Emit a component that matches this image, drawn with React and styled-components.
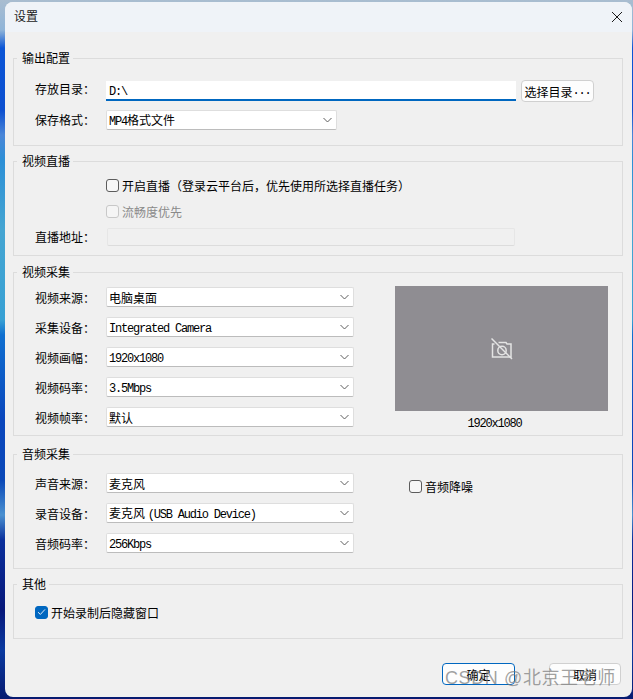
import React from "react";
import styled, { createGlobalStyle } from "styled-components";

const GlobalStyle = createGlobalStyle`
  html, body {
    margin: 0;
    padding: 0;
    background: #0a3fb0;
  }
  * {
    box-sizing: border-box;
  }
`;

const Desktop = styled.div`
  position: relative;
  width: 633px;
  height: 699px;
  padding: 2px 1px 2px 5px;
  overflow: hidden;
  background: linear-gradient(
    180deg,
    #a9bdd0 0,
    #8fb4d8 30px,
    #0b55d6 48px,
    #0c4fd0 110px,
    #4a86d8 135px,
    #2c8fd6 160px,
    #45a5d2 230px,
    #37a0d4 320px,
    #0f6fd0 335px,
    #0a46bc 420px,
    #0a48b8 480px,
    #4a90d0 515px,
    #0a2f9c 540px,
    #07187a 610px,
    #0a3aa0 650px,
    #071a70 699px
  );
  font-family: "Noto Sans CJK SC", "Liberation Sans", sans-serif;
  font-size: 12px;
  color: #000;
`;

const Window = styled.div`
  display: flex;
  flex-direction: column;
  height: 100%;
  background: #f0f0f0;
  border-radius: 8px;
  overflow: hidden;
`;

const TitleBar = styled.div`
  display: flex;
  align-items: center;
  justify-content: space-between;
  flex: none;
  height: 30px;
  padding: 0 10px 0 9px;
  background: #eff3f8;
  color: #1a1a1a;
`;

const TitleText = styled.span`
  margin-bottom: 3px;
`;

const CloseIcon = styled.svg`
  display: block;
  width: 10px;
  height: 10px;
`;

const Body = styled.div`
  display: flex;
  flex-direction: column;
  flex: 1;
  padding: 18px 9px 0 8px;
`;

const Group = styled.fieldset`
  margin: ${(p) => p.$top || 0}px 0 0;
  padding: ${(p) => p.$pad || "14px 0 14px 21px"};
  border: 1px solid #dcdcdc;
  min-width: 0;
`;

const Legend = styled.legend`
  margin-left: -18px;
  padding: 0 3px 0 5px;
  height: 16px;
  line-height: 16px;
`;

const Row = styled.div`
  display: flex;
  align-items: center;
  margin-top: ${(p) => p.$top || 0}px;
`;

const Label = styled.div`
  display: flex;
  align-items: center;
  flex: none;
  width: 71px;
  height: 20px;
  padding-bottom: ${(p) => p.$raise || 0}px;
`;

const Latin = styled.span`
  font-family: "Liberation Mono", monospace;
  letter-spacing: -1.2px;
  font-size: 12px;
`;

const PathInput = styled.div`
  width: 410px;
  height: 20px;
  padding-left: 3px;
  line-height: 17px;
  background: #fff;
  border-bottom: 2px solid #0067c0;
`;

const Button = styled.div`
  display: flex;
  align-items: center;
  justify-content: center;
  width: ${(p) => p.$width || 73}px;
  height: 22px;
  margin-left: ${(p) => p.$left || 0}px;
  background: #fdfdfd;
  border: 1px solid ${(p) => (p.$primary ? "#0067c0" : "#d0d0d0")};
  border-radius: 4px;
`;

const SelectBox = styled.div`
  display: flex;
  align-items: center;
  justify-content: space-between;
  width: ${(p) => p.$width || 248}px;
  height: 20px;
  padding: 0 3px 0 2px;
  background: #fff;
  border: 1px solid #dedede;
  border-bottom-color: #bcbcbc;
  border-radius: 2px;
`;

const Chevron = styled.svg`
  display: block;
  flex: none;
  width: 9px;
  height: 6px;
  margin-right: 1px;
`;

const Select = ({ width, children }) => (
  <SelectBox $width={width}>
    <span>{children}</span>
    <Chevron viewBox="0 0 9 6" fill="none" stroke="#5f5f5f" strokeWidth="1">
      <path d="M0.5 1 L4.5 5 L8.5 1" />
    </Chevron>
  </SelectBox>
);

const Check = styled.div`
  display: flex;
  align-items: center;
  height: 16px;
  margin-left: ${(p) => p.$left || 0}px;
  margin-top: ${(p) => p.$top || 0}px;
  color: ${(p) => (p.$disabled ? "#8a8a8a" : "#000")};
`;

const CheckBox = styled.div`
  display: flex;
  align-items: center;
  justify-content: center;
  flex: none;
  width: 13px;
  height: 13px;
  margin-right: 3px;
  background: ${(p) => (p.$checked ? "#0067c0" : p.$disabled ? "#f5f5f5" : "#f7f7f7")};
  border: 1px solid ${(p) => (p.$checked ? "#0067c0" : p.$disabled ? "#c8c8c8" : "#5c5c5c")};
  border-radius: 3px;
`;

const CheckItem = ({ checked, disabled, left, top, children }) => (
  <Check $left={left} $top={top} $disabled={disabled}>
    <CheckBox $checked={checked} $disabled={disabled}>
      {checked && (
        <svg width="9" height="8" viewBox="0 0 9 8" fill="none" stroke="#dfeaf6" strokeWidth="1">
          <path d="M1 4.2 L3.4 6.4 L8 1.4" />
        </svg>
      )}
    </CheckBox>
    {children}
  </Check>
);

const AddressInput = styled.div`
  width: 408px;
  height: 18px;
  margin-left: 1px;
  background: #f0f0f0;
  border: 1px solid #e6e6e6;
  border-bottom-color: #dcdcdc;
  border-radius: 2px;
`;

const Columns = styled.div`
  display: flex;
  align-items: flex-start;
`;

const Fields = styled.div`
  display: flex;
  flex: none;
  flex-direction: column;
  gap: 10px;
`;

const PreviewColumn = styled.div`
  display: flex;
  flex: none;
  flex-direction: column;
  height: 140px;
  margin-left: 41px;
  margin-top: -1px;
`;

const Preview = styled.div`
  display: flex;
  align-items: center;
  justify-content: center;
  flex: none;
  width: 213px;
  height: 125px;
  background: #8f8d92;
`;

const PreviewCaption = styled.div`
  margin-top: 3px;
  padding-right: 14px;
  text-align: center;
  line-height: 16px;
`;

const Footer = styled.div`
  display: flex;
  justify-content: flex-end;
  margin-top: 24px;
  padding-right: 2px;
`;

const Watermark = styled.div`
  position: absolute;
  left: 445px;
  top: 666px;
  font-family: "Liberation Sans", "Noto Sans CJK SC", sans-serif;
  font-size: 18px;
  line-height: 24px;
  letter-spacing: 0.6px;
  white-space: nowrap;
  color: rgba(120, 120, 120, 0.7);
`;

const videoFields = [
  ["视频来源：", "电脑桌面"],
  ["采集设备：", <Latin key="c">Integrated Camera</Latin>],
  ["视频画幅：", <Latin key="r">1920x1080</Latin>],
  ["视频码率：", <Latin key="b">3.5Mbps</Latin>],
  ["视频帧率：", "默认"],
];

const audioFields = [
  ["声音来源：", "麦克风"],
  ["录音设备：", <>麦克风 <Latin>(USB Audio Device)</Latin></>],
  ["音频码率：", <Latin key="k">256Kbps</Latin>],
];

const App = () => (
  <Desktop>
    <GlobalStyle />
    <Window>
      <TitleBar>
        <TitleText>设置</TitleText>
        <CloseIcon viewBox="0 0 10 10" fill="none" stroke="#1c1c1c" strokeWidth="1">
          <path d="M0 0 L10 10 M10 0 L0 10" />
        </CloseIcon>
      </TitleBar>
      <Body>
        <Group $pad="14px 0 15px 21px">
          <Legend>输出配置</Legend>
          <Row>
            <Label $raise={6}>存放目录：</Label>
            <PathInput><Latin>D:\</Latin></PathInput>
            <Button $left={5}>选择目录<Latin>...</Latin></Button>
          </Row>
          <Row $top={8}>
            <Label $raise={2}>保存格式：</Label>
            <Select width={231}><Latin>MP4</Latin>格式文件</Select>
          </Row>
        </Group>

        <Group $top={7} $pad="8px 0 8px 21px">
          <Legend>视频直播</Legend>
          <CheckItem left={71}>开启直播（登录云平台后，优先使用所选择直播任务）</CheckItem>
          <CheckItem left={71} top={10} disabled>流畅度优先</CheckItem>
          <Row $top={8}>
            <Label $raise={2}>直播地址：</Label>
            <AddressInput />
          </Row>
        </Group>

        <Group $top={8} $pad="7px 0 8px 21px">
          <Legend>视频采集</Legend>
          <Columns>
            <Fields>
              {videoFields.map(([label, value]) => (
                <Row key={label}>
                  <Label>{label}</Label>
                  <Select>{value}</Select>
                </Row>
              ))}
            </Fields>
            <PreviewColumn>
              <Preview>
                <svg width="22" height="22" viewBox="0 0 22 22" fill="none" stroke="#e4e4e4" strokeWidth="1.5">
                  <path d="M3.5 6 H1.5 V19 H20 V6 H16 L15 4.5 H7.5" />
                  <circle cx="11" cy="12.5" r="4.2" />
                  <path d="M0.5 0.5 L21 21" />
                </svg>
              </Preview>
              <PreviewCaption><Latin>1920x1080</Latin></PreviewCaption>
            </PreviewColumn>
          </Columns>
        </Group>

        <Group $top={10} $pad="11px 0 15px 21px">
          <Legend>音频采集</Legend>
          <Columns>
            <Fields>
              {audioFields.map(([label, value]) => (
                <Row key={label}>
                  <Label>{label}</Label>
                  <Select>{value}</Select>
                </Row>
              ))}
            </Fields>
            <CheckItem left={55} top={5}>音频降噪</CheckItem>
          </Columns>
        </Group>

        <Group $top={7} $pad="12px 0 18px 21px">
          <Legend>其他</Legend>
          <CheckItem checked>开始录制后隐藏窗口</CheckItem>
        </Group>

        <Footer>
          <Button $primary>确定</Button>
          <Button $left={34} $width={72}>取消</Button>
        </Footer>
      </Body>
    </Window>
    <Watermark>CSDN @北京王老师</Watermark>
  </Desktop>
);

export default App;
